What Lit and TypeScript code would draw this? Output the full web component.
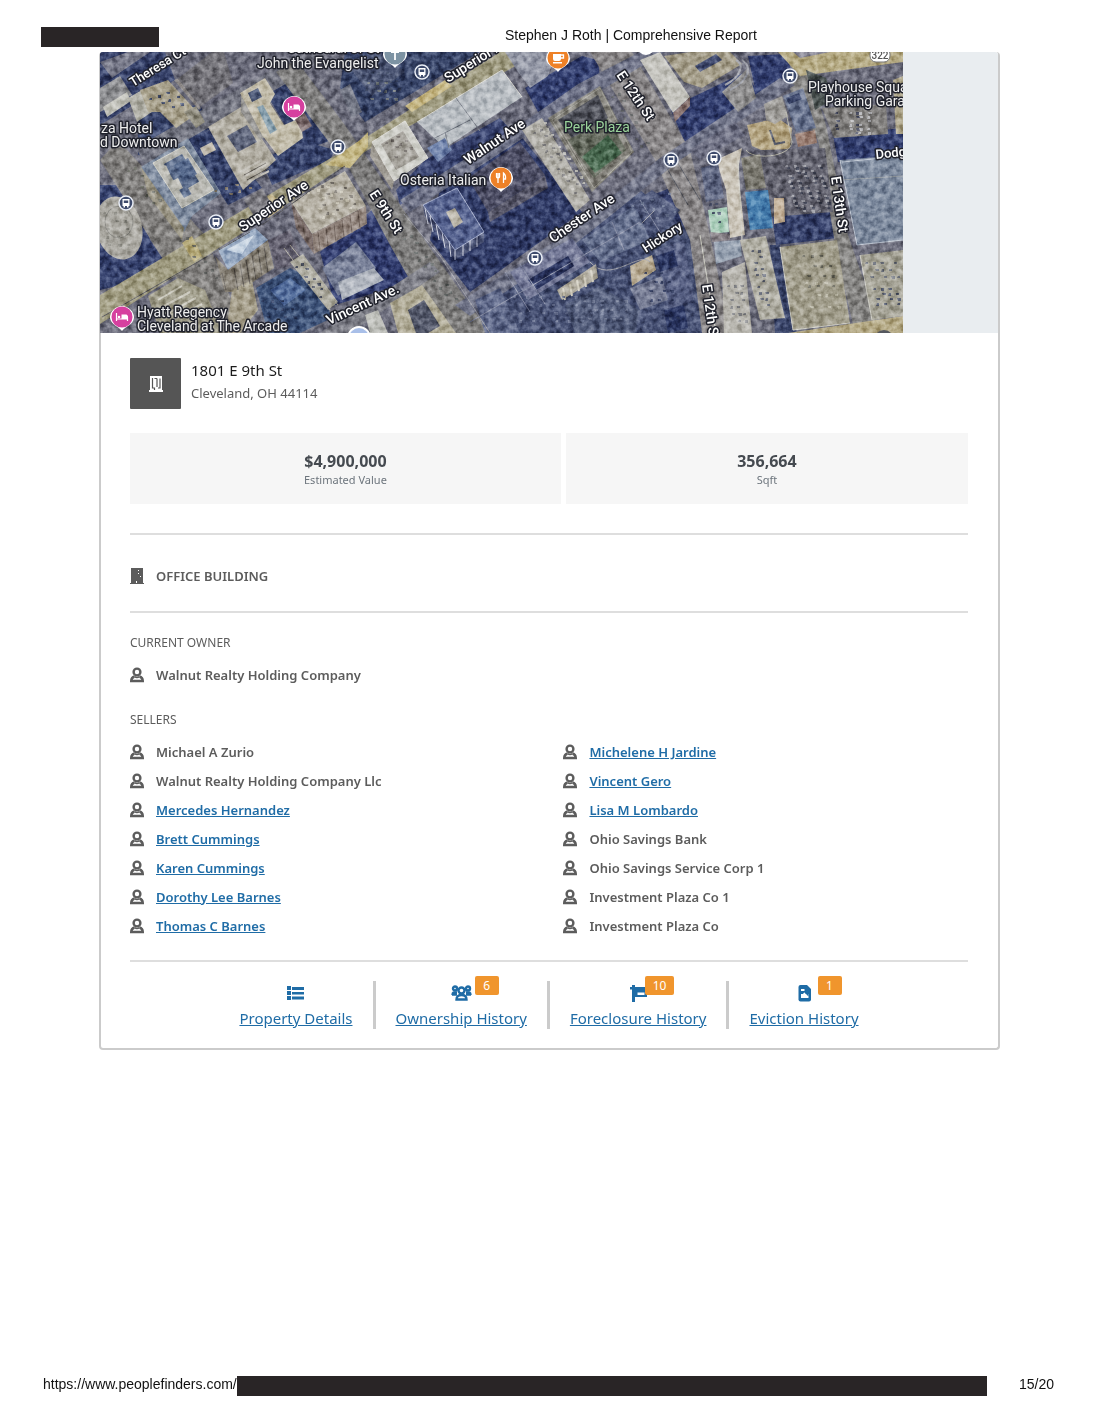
import { LitElement, html, css, svg, nothing } from "lit";
import { customElement, property } from "lit/decorators.js";

type Shape = [fill: string, points: string];

interface Person {
  name: string;
  linked?: boolean;
}

interface Action {
  label: string;
  icon: "list" | "users" | "sign" | "doc";
  count?: number;
}

/* Ground-level bands: shadows and streets, painted back to front. */
const GROUND: Shape[] = [
  ["#2c3764", "100,52 165,52 175,80 100,125"],
  ["#2e3a66", "138,110 200,105 212,128 165,158 138,155"],
  ["#293562", "263,80 292,70 345,135 305,150 285,125 270,100"],
  ["#293562", "186,140 215,128 262,188 228,205"],
  ["#2c3866", "262,160 300,140 335,150 330,160 272,185"],
  ["#2d3a63", "345,52 480,52 365,122 340,88"],
  ["#2b3768", "100,185 135,185 150,240 165,262 120,285 100,290"],
  ["#27336a", "320,252 372,210 420,265 400,285 335,305"],
  ["#263162", "440,188 520,135 582,212 470,292 430,240"],
  ["#2d3768", "640,200 690,180 700,270 712,333 640,333"],
  ["#28346a", "670,108 745,72 760,95 686,145"],
  ["#28346a", "748,56 786,54 795,82 757,98"],
  ["#28346a", "525,88 582,56 598,60 600,78 538,112"],
  ["#28346a", "833,135 903,128 903,157 838,162"],
  ["#2c3766", "772,216 834,211 838,238 776,245"],
  ["#323d66", "770,245 780,245 797,333 775,333"],
  ["#3e486f", "500,280 640,190 700,240 710,333 470,333"],
  ["#303b6c", "396,190 425,160 500,118 515,135 400,205"],
  ["#817d7b", "100,160 118,140 205,235 245,333 215,333 165,262"],
  ["#71727f", "136,148 285,62 300,52 330,52 296,78 145,164"],
  ["#7d7b7a", "276,72 296,60 345,125 372,165 490,333 440,333 390,245 350,170"],
  ["#898586", "590,52 632,52 690,150 710,235 730,333 702,333 690,240 655,160"],
  ["#858380", "782,75 808,70 826,125 848,235 882,333 855,333 836,250 818,140"],
  ["#6b6f86", "400,200 530,118 578,84 640,52 665,52 545,124 410,212"],
  ["#6d7086", "455,305 560,238 660,158 780,78 795,85 680,160 570,248 470,316"],
  ["#7a7a84", "320,333 430,262 440,272 350,333"],
  ["#a19b7d", "100,295 270,194 368,136 500,52 540,52 368,150 275,212 100,324"],
  ["#c4b486", "255,205 272,194 284,207 268,218"],
  ["#c8b87f", "325,165 360,140 368,132 368,147 350,168"],
  ["#cbb980", "405,106 445,80 452,86 412,112"],
  ["#beb07c", "182,243 192,236 202,256 194,262"],
  ["#b9ac80", "778,52 903,52 903,62 800,76"],
  ["#b9ac84", "788,333 903,316 903,333"],
];

/* Roofs and facades. */
const BUILDINGS: Shape[] = [
  ["#77788a", "100,62 128,52 150,52 112,78"],
  ["#8d8d90", "100,88 120,76 132,95 100,112"],
  ["#cccbc3", "103,107 127,92 131,101 107,117"],
  ["#b7b5ab", "128,98 142,90 152,112 137,122"],
  ["#aaa18a", "140,90 168,80 198,113 176,128 160,112 148,112"],
  ["#6e6b72", "176,80 212,52 224,52 233,83 200,107"],
  ["#8f8a88", "174,80 178,79 201,108 199,110"],
  ["#8e8a7a", "184,112 196,106 205,122 196,128"],
  ["#b6b0a4", "208,127 241,107 276,160 243,190"],
  ["#989694", "241,93 250,88 268,135 260,140 241,112"],
  ["#5b617a", "227,136 247,125 257,142 238,152"],
  ["#c8c0ac", "240,93 265,78 275,94 270,103 284,125 300,118 303,138 278,156 262,135"],
  ["#3a4769", "248,93 258,88 262,97 252,102"],
  ["#87a1b0", "257,107 263,105 277,130 270,134"],
  ["#7a6667", "294,118 304,112 312,126 302,132"],
  ["#c4bcad", "200,148 212,142 216,150 204,156"],
  ["#7d8ba1", "141,167 188,138 221,193 192,216 184,232"],
  ["#9c9684", "141,167 184,228 182,240 148,195"],
  ["#b9b8b1", "153,163 184,146 214,190 182,208"],
  ["#586a8d", "164,164 182,154 203,188 184,198"],
  ["#cac8c0", "160,170 166,165 170,174 164,178"],
  ["#c2c0b8", "170,182 178,178 183,188 175,192"],
  ["#c0beb7", "188,188 202,180 206,188 192,195"],
  ["#4e6289", "174,165 188,158 197,174 183,182"],
  ["#7f7d84", "244,200 262,188 272,205 254,216"],
  ["#9aadc8", "218,250 255,228 268,240 228,270"],
  ["#d3dfee", "226,250 254,235 242,254"],
  ["#8d8579", "215,256 228,270 268,240 274,268 238,292 225,292"],
  ["#605c6c", "268,240 290,230 303,262 276,270"],
  ["#a09b86", "148,296 178,278 205,290 222,333 160,333"],
  ["#324872", "256,288 290,268 318,282 332,318 300,333 268,333"],
  ["#4b679b", "270,290 290,278 306,290 284,306"],
  ["#bab4a6", "291,202 345,171 366,206 312,234"],
  ["#7b6a66", "291,202 312,234 314,254 296,228"],
  ["#94847b", "312,234 366,206 367,224 314,254"],
  ["#767e99", "322,268 356,242 376,268 338,296"],
  ["#b7bcc6", "338,282 374,268 384,280 342,300"],
  ["#b0ada0", "290,262 303,254 338,302 328,310"],
  ["#a79f88", "232,290 252,280 258,310 240,333 226,333"],
  ["#454f70", "345,62 380,52 405,72 372,96"],
  ["#6e7180", "340,90 350,84 362,112 352,118"],
  ["#bec2c8", "417,122 502,70 522,97 445,148"],
  ["#6e82ae", "427,148 445,138 452,150 438,162"],
  ["#d6d5cf", "372,142 405,121 428,158 394,181"],
  ["#aca7a0", "381,144 403,131 419,157 396,170"],
  ["#a09a91", "372,142 394,181 392,190 370,156"],
  ["#989bab", "505,52 556,52 548,76 530,88 518,72"],
  ["#b2aea6", "522,130 542,118 590,200 576,212"],
  ["#85827a", "548,118 600,86 634,152 592,192"],
  ["#4a4b55", "558,120 598,95 608,118 575,142"],
  ["#606557", "568,140 608,118 626,150 594,178"],
  ["#3f6146", "582,157 608,135 622,153 595,173"],
  ["#46465f", "468,178 520,142 545,175 488,212"],
  ["#4d4c60", "488,212 545,175 548,188 490,222"],
  ["#4f5c8e", "423,205 457,188 484,232 455,250"],
  ["#3e466d", "423,205 455,250 455,260 425,216"],
  ["#454d73", "455,250 484,232 484,242 455,260"],
  ["#bfb8aa", "446,212 455,208 463,222 454,228"],
  ["#74799a", "510,272 572,238 590,262 528,300"],
  ["#222c5c", "528,280 568,256 574,266 536,290"],
  ["#606b8d", "582,240 635,205 650,240 600,262"],
  ["#b1ab9c", "557,290 596,264 598,278 562,300"],
  ["#5a6488", "475,300 500,288 520,333 485,333"],
  ["#4c5678", "565,305 600,286 640,310 635,333 575,333"],
  ["#b7b09a", "390,303 422,285 456,333 398,333"],
  ["#4a4e62", "408,310 424,300 440,326 428,333 416,333"],
  ["#c5c4bf", "365,315 378,310 388,333 370,333"],
  ["#cbc9c2", "640,60 660,52 690,97 673,113"],
  ["#876f6b", "673,113 690,97 690,106 675,122"],
  ["#a79f88", "664,56 690,52 730,52 742,64 702,88 684,82"],
  ["#404a72", "695,66 716,54 722,60 700,72"],
  ["#8e8c8c", "722,92 748,68 756,98 738,112"],
  ["#6b6c82", "690,150 735,122 745,135 700,160"],
  ["#b9a781", "747,125 778,118 792,128 790,148 770,154 752,146"],
  ["#a09c98", "764,104 782,96 788,116 775,124 766,120"],
  ["#65708e", "783,96 803,88 816,128 796,132"],
  ["#2f3a62", "786,98 799,93 802,99 789,104"],
  ["#98786a", "795,134 815,130 817,143 798,147"],
  ["#5d5c69", "760,150 825,148 833,212 770,217"],
  ["#7a776c", "741,158 760,154 766,188 746,190"],
  ["#3b78ad", "745,192 768,190 773,228 750,230"],
  ["#d2cabd", "716,160 742,148 738,170 745,235 730,238 726,190"],
  ["#5b6280", "701,168 718,163 724,198 706,202"],
  ["#b3d6c2", "708,210 727,207 729,232 711,234"],
  ["#cbb69c", "774,198 784,198 785,222 774,224"],
  ["#857d84", "710,232 730,234 730,240 712,242"],
  ["#99a4b5", "714,242 740,240 742,256 716,264"],
  ["#b4b0a4", "740,240 766,236 785,318 760,320"],
  ["#bbb8b0", "722,272 745,262 752,333 724,333"],
  ["#a39d89", "780,247 837,240 850,323 793,330"],
  ["#7b889f", "840,160 903,155 903,240 857,245"],
  ["#aaa698", "860,255 903,250 903,316 872,320"],
  ["#7e7b79", "822,108 886,104 888,134 834,138"],
  ["#48504f", "806,70 826,78 832,100 815,110"],
  ["#b2a78a", "893,80 903,76 903,134 896,134"],
  ["#8a8797", "793,52 830,52 800,58"],
  ["#4b5479", "630,205 652,190 680,210 662,232"],
  ["#b9aa8f", "630,266 652,255 656,270 632,286"],
  ["#515a80", "655,250 684,240 694,300 668,310"],
  ["#1f2a5a", "656,256 674,250 678,266 660,272"],
  ["#1f2a5a", "664,310 684,305 688,328 668,333"],
  ["#747a95", "630,288 662,276 668,300 640,310"],
];

/* Fine linework on roofs: [colour, width, path]. */
const LINES: [string, number, string][] = [
  ["#55545a", 1, "M102 317 L250 232 M262 225 L345 166"],
  ["#d8d6cc", 1, "M153 163 184 146 214 190 182 208Z"],
  ["#e2e0da", 1, "M372 142 405 121 428 158 394 181Z M417 122 502 70 522 97"],
  ["#7a7f8a", 1, "M456 98 480 131 M433 139 470 120 M445 132 449 148"],
  ["#d9dbe8", 1, "M425 208 428 224 M430 216 433 232 M436 224 439 240 M442 232 445 248 M449 241 451 257 M455 250V260 M463 245V256 M470 241V251 M477 236V247"],
  ["#aab3d3", 1, "M423 205 457 188 484 232 455 250Z"],
  ["#d8d2c2", 2, "M563 288 565 300 M570 284 572 296 M577 280 579 291 M584 275 586 287 M591 270 593 282"],
  ["#c9c5bc", 2, "M240 172 262 160 M243 177 266 165 M246 183 269 171"],
  ["#5c5650", 1, "M244 175 266 163 M247 180 269 168 M222 273 226 290 M234 268 238 290 M240 264 244 287 M246 260 250 284 M252 255 256 280 M258 250 262 276 M264 246 268 272"],
  ["#66574f", 1, "M318 232 320 250 M326 228 328 246 M334 224 336 242 M342 220 344 237 M350 215 352 233 M358 211 360 229 M296 212 299 228 M302 220 305 238"],
  ["#d2cfc2", 2, "M158 300 182 286 M164 306 190 292 M168 313 196 298 M172 320 202 304"],
  ["#a7a49a", 1, "M552 120 600 88 632 152 594 188Z M560 128 586 172"],
  ["#b9b6a8", 1, "M746 150 C752 160 790 158 792 142 L786 112"],
  ["#bfc7d4", 1, "M840 160 857 245 903 240 M842 162 903 156"],
  ["#9fa5ab", 1, "M840 180 903 176"],
  ["#d4d2c8", 1, "M780 247 793 330 850 323 M860 255 872 320 M700 235 716 333 M738 160 742 240"],
  ["#a8a9b2", 2, "M725 85 C742 76 744 64 736 60 M730 90 C750 80 752 66 742 60"],
  ["#8a8fa8", 1, "M470 322 640 222 M505 272 530 312 M520 264 545 304 M612 222 624 250 M640 200 665 240"],
  ["#9b9ba4", 1, "M440 256 490 333 M404 214 445 262 M655 210 640 225 M590 262 C610 285 640 250 650 262"],
  ["#5a5c66", 1, "M665 165 688 205 M676 160 700 200"],
  ["#4c5162", 2, "M770 130 775 144 785 142"],
  ["#b8b2a6", 1, "M290 245 338 305 M284 248 330 310"],
];

/* Small repeated marks: rows of parked cars, roof vents and trees.
   [x, y, columns, rows, column step, row step, row skew, colour] */
const MARKS: [number, number, number, number, number, number, number, string][] = [
  [786, 165, 5, 10, 8, 5, 1, "#a0a0a9"],
  [788, 167, 5, 9, 8, 5, 1, "#2f3247"],
  [836, 112, 2, 6, 20, 4, 0, "#30354f"],
  [850, 112, 3, 6, 9, 4, 0, "#c5c5ca"],
  [296, 266, 2, 7, 5, 5, 4, "#3e4358"],
  [150, 98, 4, 3, 8, 7, 3, "#39466e"],
  [386, 142, 4, 3, 5, 7, 4, "#77716c"],
  [534, 132, 3, 11, 6, 6, 4, "#7b7a7c"],
  [531, 128, 3, 11, 6, 6, 4, "#cdcac2"],
  [752, 250, 2, 10, 6, 6, 1, "#5b6074"],
  [803, 255, 4, 4, 8, 10, 2, "#6d6c62"],
  [806, 282, 4, 3, 9, 12, 2, "#c9c5b4"],
  [866, 262, 5, 3, 7, 7, 2, "#5c6070"],
  [874, 288, 4, 4, 7, 5, 1, "#4b526c"],
  [312, 188, 4, 4, 9, 8, 5, "#757068"],
  [308, 192, 4, 4, 9, 8, 5, "#ddd8cb"],
  [180, 240, 2, 6, 6, 8, 6, "#5f605f"],
  [128, 170, 2, 5, 6, 8, 6, "#66675f"],
  [404, 238, 2, 10, 6, 7, 5, "#5c6160"],
  [612, 96, 2, 8, 6, 7, 4, "#66676a"],
  [104, 212, 3, 5, 10, 8, 1, "#8c8a83"],
  [728, 285, 3, 6, 6, 7, 1, "#7c7c84"],
  [704, 176, 2, 6, 5, 9, 2, "#49506d"],
  [360, 64, 5, 4, 8, 8, 2, "#303b58"],
  [368, 82, 4, 3, 8, 8, 1, "#767a78"],
  [645, 272, 4, 6, 7, 9, 2, "#2c365e"],
  [514, 296, 8, 4, 12, 8, 2, "#6f7898"],
  [632, 205, 5, 3, 9, 9, 3, "#76809c"],
  [215, 190, 4, 2, 10, 6, 4, "#8a7a62"],
  [584, 300, 6, 3, 8, 9, 2, "#747d98"],
  [262, 300, 4, 3, 9, 8, 2, "#223056"],
];

/* [text, x, y, rotation, size, weight, fill] */
const LABELS: [string, number, number, number, number, number, string][] = [
  ["Theresa Ct", 133, 87, -32, 13, 500, "#fff"],
  ["Cathedral of St", 287, 53, 0, 14, 400, "#eee"],
  ["John the Evangelist", 257, 68, 0, 14, 400, "#eee"],
  ["Superior Ave", 448, 83, -32, 14, 500, "#fff"],
  ["Superior Ave", 243, 232, -34, 14, 500, "#fff"],
  ["za Hotel", 101, 133, 0, 14, 400, "#eee"],
  ["d Downtown", 100, 147, 0, 14, 400, "#eee"],
  ["Osteria Italian", 400, 185, 0, 14, 400, "#eee"],
  ["Walnut Ave", 468, 165, -34, 14, 500, "#fff"],
  ["E 9th St", 369, 194, 57, 14, 500, "#fff"],
  ["E 12th St", 616, 75, 56, 14, 500, "#fff"],
  ["Perk Plaza", 564, 132, 0, 14, 400, "#9ad29a"],
  ["Chester Ave", 553, 243, -34, 14, 500, "#fff"],
  ["Hickory", 646, 253, -33, 13, 500, "#fff"],
  ["E 13th St", 831, 177, 82, 14, 500, "#fff"],
  ["E 12th St", 702, 285, 82, 14, 500, "#fff"],
  ["Dodge Ct", 876, 159, -6, 13, 500, "#fff"],
  ["Playhouse Square", 808, 92, 0, 14, 400, "#eee"],
  ["Parking Garage", 825, 106, 0, 14, 400, "#eee"],
  ["Vincent Ave.", 329, 325, -25, 14, 500, "#fff"],
  ["Hyatt Regency", 137, 317, 0, 14, 400, "#eee"],
  ["Cleveland at The Arcade", 137, 331, 0, 14, 400, "#eee"],
];

const STOPS: [number, number][] = [
  [422, 72], [338, 147], [126, 203], [216, 222], [535, 258], [671, 160], [714, 158], [790, 76],
];

@customElement("area-map")
class AreaMap extends LitElement {
  static styles = css`
    :host {
      display: block;
      overflow: hidden;
      background: #e9edf0;
      border-radius: 3px 3px 0 0;
    }
    .canvas {
      display: block;
      width: 803px;
      height: 281px;
    }
    .grain {
      mix-blend-mode: soft-light;
    }
    .label {
      font-family: Roboto, "Noto Sans", sans-serif;
      stroke: #20222c;
      stroke-width: 3px;
      stroke-linejoin: round;
      paint-order: stroke;
    }
    .route {
      font: 500 10px Roboto, sans-serif;
      fill: #555;
      text-anchor: middle;
    }
  `;

  private marks() {
    return MARKS.map(([x, y, cols, rows, dx, dy, skew, colour]) => {
      let d = "";
      for (let r = 0; r < rows; r++) {
        for (let c = 0; c < cols; c++) {
          if ((r * 7 + c * 5) % 4 === 3) continue;
          const px = x + c * dx + r * skew;
          const py = y + r * dy - (skew > 2 ? c * 3 : 0);
          d += `M${px} ${py}h${2 + ((r + c) % 3)}v${2 + ((r + c) % 2)}h-3z`;
        }
      }
      return svg`<path d=${d} fill=${colour} opacity="0.85" />`;
    });
  }

  private pin(x: number, y: number, colour: string, glyph: unknown) {
    return svg`<g transform="translate(${x} ${y})">
      <path d="M-12 1A12 12 0 1 1 12 1C11 8 4 9 0 14C-4 9 -11 8 -12 1Z" fill="#fff" />
      <circle r="10.500" fill=${colour} />
      ${glyph}
    </g>`;
  }

  render() {
    const bed = svg`<path d="M-5.500 -4V4M-5.500 2H5.500M5.500 4V0" fill="none" stroke="#fff" stroke-width="1.200" />
      <path d="M-0.500 -2.500H4.500L6 -1V2H-0.500Z" fill="#fff" /><circle cx="-3" cy="0" r="1.300" fill="#fff" />`;
    return html`<svg class="canvas" viewBox="100 52 803 281" role="img" aria-label="Satellite map">
      <defs>
        <filter id="grain" x="0" y="0" width="100%" height="100%" color-interpolation-filters="sRGB">
          <feTurbulence type="fractalNoise" baseFrequency="0.16" numOctaves="3" seed="8" />
          <feColorMatrix values="1.8 0 0 0 -0.38  1.8 0 0 0 -0.38  1.8 0 0 0 -0.38  0 0 0 0 1" />
        </filter>
      </defs>
      <rect x="100" y="52" width="803" height="281" fill="#69697a" />
      ${GROUND.map(([f, p]) => svg`<polygon points=${p} fill=${f} />`)}
      ${BUILDINGS.map(([f, p]) => svg`<polygon points=${p} fill=${f} />`)}
      <ellipse cx="119" cy="228" rx="23" ry="32" fill="#aeaba3" transform="rotate(-14 119 228)" />
      <ellipse cx="119" cy="222" rx="14" ry="16" fill="none" stroke="#8a8882" />
      ${LINES.map(([c, w, d]) => svg`<path d=${d} stroke=${c} stroke-width=${w} fill="none" />`)}
      ${this.marks()}
      <rect x="100" y="52" width="803" height="281" fill="#8c8f92" opacity="0.1" />
      <rect class="grain" x="100" y="52" width="803" height="281" filter="url(#grain)" opacity="0.7" />
      ${STOPS.map(([x, y]) => svg`<g transform="translate(${x} ${y})">
        <circle r="7" fill="#3d4a6b" stroke="#e9edf5" stroke-width="1.500" />
        <path d="M-3.500 -4H3.500V3H2.500V4.500H1V3H-1V4.500H-2.500V3H-3.500Z" fill="#fff" />
        <path d="M-2.200 -2.500H2.200V0H-2.200Z" fill="#3d4a6b" />
      </g>`)}
      ${this.pin(294, 107, "#d6409f", bed)}
      ${this.pin(122, 317, "#d6409f", bed)}
      ${this.pin(501, 178, "#ee8127", svg`<path d="M-4.500 -5V-1.500Q-4.500 0 -3 0V5M-3 -5V0M-1.500 -5V-1.500Q-1.500 0 -3 0M2.500 5V-5Q5 -3 4.500 1H2.500" fill="none" stroke="#fff" stroke-width="1.300" />`)}
      ${this.pin(558, 58, "#ee8127", svg`<path d="M-5 -4H3V1Q3 3 1 3H-3Q-5 3 -5 1ZM-5 4H4V5.500H-5Z" fill="#fff" /><path d="M3 -3H5.500V0H3" fill="none" stroke="#fff" stroke-width="1.300" />`)}
      ${this.pin(395, 54, "#7d93a3", svg`<path d="M0 -6V6M-4 -2H4" stroke="#fff" stroke-width="1.800" />`)}
      <circle cx="359" cy="338" r="11" fill="#a9bfe8" stroke="#fff" stroke-width="2" />
      <circle cx="884" cy="340" r="10" fill="#55585f" />
      <circle cx="646" cy="46" r="9" fill="#fff" />
      <rect x="870" y="48" width="20" height="14" rx="6" fill="#fff" stroke="#777" />
      <text class="route" x="880" y="59">322</text>
      ${LABELS.map(([t, x, y, a, s, w, f]) => svg`<text class="label" transform="translate(${x} ${y}) rotate(${a})"
        font-size=${s} font-weight=${w} fill=${f}>${t}</text>`)}
    </svg>`;
  }
}

@customElement("person-item")
class PersonItem extends LitElement {
  @property() name = "";
  @property({ type: Boolean }) linked = false;

  static styles = css`
    :host {
      display: flex;
      align-items: center;
      gap: 12px;
      height: 29px;
      font-weight: 600;
    }
    .icon {
      width: 14px;
      height: 16px;
      flex: none;
    }
    a {
      color: #1f6ca6;
      text-underline-offset: 1px;
    }
  `;

  render() {
    return html`<svg class="icon" viewBox="0 0 14 16" fill="none" stroke="#5c5c5c" stroke-width="2.400" aria-hidden="true">
        <circle cx="7" cy="5" r="3.400" />
        <path d="M4.500 9.500C2.500 10 1.300 11 1.200 14H12.800C12.700 11 11.500 10 9.500 9.500" />
        <path d="M4.500 9.500Q7 11.500 9.500 9.500" stroke-width="1.500" />
      </svg>
      ${this.linked ? html`<a href="#">${this.name}</a>` : html`<span>${this.name}</span>`}`;
  }
}

const SELLERS: Person[][] = [
  [
    { name: "Michael A Zurio" },
    { name: "Walnut Realty Holding Company Llc" },
    { name: "Mercedes Hernandez", linked: true },
    { name: "Brett Cummings", linked: true },
    { name: "Karen Cummings", linked: true },
    { name: "Dorothy Lee Barnes", linked: true },
    { name: "Thomas C Barnes", linked: true },
  ],
  [
    { name: "Michelene H Jardine", linked: true },
    { name: "Vincent Gero", linked: true },
    { name: "Lisa M Lombardo", linked: true },
    { name: "Ohio Savings Bank" },
    { name: "Ohio Savings Service Corp 1" },
    { name: "Investment Plaza Co 1" },
    { name: "Investment Plaza Co" },
  ],
];

const ACTIONS: Action[] = [
  { label: "Property Details", icon: "list" },
  { label: "Ownership History", icon: "users", count: 6 },
  { label: "Foreclosure History", icon: "sign", count: 10 },
  { label: "Eviction History", icon: "doc", count: 1 },
];

const ACTION_ICONS = {
  list: svg`<path d="M2 3h4v4H2zM2 8h4v4H2zM2 13h4v4H2zM7 4h12v3H7zM7 9h12v2.500H7zM7 13.500h12v3H7z" fill="currentColor" />`,
  users: svg`<g fill="none" stroke="currentColor" stroke-width="2.400">
    <circle cx="10.500" cy="7.500" r="3" /><path d="M5.500 16.500C5.500 13.500 7.500 12 10.500 12S15.500 13.500 15.500 16.500Z" />
    <circle cx="4" cy="5.500" r="2" /><circle cx="17" cy="5.500" r="2" />
    <path d="M1.500 12C1.500 9.500 2.500 9 6 9.500M19.500 12C19.500 9.500 18.500 9 15 9.500M1 11.500H6M15 11.500H20" /></g>`,
  sign: svg`<path d="M4 2h3v2h12v10H7v5H4V6.500H2V4h2z" fill="currentColor" /><path d="M9.500 9.500h7v2.500h-7z" fill="#fff" />`,
  doc: svg`<path d="M6.500 2H13l4 4v10.500Q17 18.500 15 18.500H6.500Q4.500 18.500 4.500 16.500V4Q4.500 2 6.500 2Z" fill="currentColor" />
    <path d="M7 6h3.500v2H7zM7 11h2l1.500-2 1.500 2h2.500v4H7z" fill="#fff" /><path d="M10.500 8.500l4 4" stroke="currentColor" stroke-width="1.500" />`,
};

@customElement("app-root")
class AppRoot extends LitElement {
  static styles = css`
    :host {
      display: flex;
      flex-direction: column;
      box-sizing: border-box;
      min-height: 100vh;
      padding: 0 41px 23px;
      background: #fff;
      color: #5c5c5c;
      font: 400 13px/20px "Noto Sans", sans-serif;
    }
    .print-header {
      display: grid;
      grid-template-columns: 464px 1fr;
      height: 25px;
      padding-top: 27px;
    }
    .print-header,
    .print-footer {
      color: #111;
      font-family: "Liberation Sans", sans-serif;
      font-size: 14px;
      line-height: 17px;
    }
    .redacted {
      height: 20px;
      background: #292526;
    }
    .print-header .redacted {
      width: 118px;
    }
    .card {
      margin: 0 56px 0 58px;
      border: 2px solid #cbcbcb;
      border-top-width: 0;
      border-radius: 4px;
    }
    area-map {
      margin-left: -1px;
    }
    .body {
      padding: 25px 30px 19px 29px;
    }
    .address {
      display: flex;
      gap: 10px;
    }
    .tile {
      display: grid;
      place-items: center;
      width: 51px;
      height: 51px;
      border-radius: 1px;
      background: #555;
    }
    .tile svg {
      width: 16px;
      height: 18px;
    }
    .street {
      margin: 1px 0 2px;
      color: #1c1c1c;
      font-size: 15px;
      font-weight: 400;
      line-height: 22px;
    }
    .city {
      margin: 0;
    }
    .stats {
      display: grid;
      grid-template-columns: 15fr 14fr;
      gap: 5px;
      margin: 24px 0 29px;
    }
    .stat {
      display: flex;
      flex-direction: column;
      align-items: center;
      padding: 18px 0 15px;
      background: #f6f6f6;
    }
    .value {
      color: #454a50;
      font-size: 16px;
      font-weight: 700;
    }
    .caption {
      color: #6d757d;
      font-size: 11px;
      line-height: 18px;
    }
    .rule {
      height: 2px;
      margin: 0;
      border: 0;
      background: #dedede;
    }
    .kind {
      display: flex;
      align-items: center;
      gap: 12px;
      padding: 31px 0 25px;
      font-weight: 600;
    }
    .kind svg {
      width: 14px;
      height: 16px;
    }
    h2 {
      margin: 0;
      font-size: 12px;
      font-weight: 400;
      line-height: 20px;
    }
    .owner {
      padding: 20px 0 17px;
    }
    .group {
      display: flex;
      flex-direction: column;
      gap: 7px;
    }
    .columns {
      display: grid;
      grid-template-columns: 15fr 14fr;
    }
    .sellers {
      padding: 4px 0 20px;
    }
    .actions {
      display: flex;
      justify-content: center;
      padding-top: 19px;
    }
    .action {
      display: flex;
      flex-direction: column;
      align-items: center;
      padding: 2px 20px 0;
      height: 46px;
      color: #1f6ca6;
      font-size: 15px;
      line-height: 22px;
      text-underline-offset: 1px;
    }
    .action + .action {
      border-left: 3px solid #cbcbcb;
    }
    .glyph {
      position: relative;
      width: 21px;
      height: 24px;
    }
    .glyph svg {
      display: block;
      width: 21px;
      height: 20px;
    }
    .badge {
      position: absolute;
      left: 100%;
      top: -7px;
      min-width: 8px;
      margin-left: 3px;
      padding: 0 8px;
      border-radius: 2px;
      background: #f0952d;
      color: #fff;
      font-size: 12px;
      line-height: 19px;
      text-align: center;
    }
    .badge.wide {
      margin-left: -4px;
    }
    .print-footer {
      display: flex;
      margin-top: auto;
      padding-left: 2px;
    }
    .print-footer .redacted {
      flex: 1;
    }
    .page-no {
      padding: 0 2px 0 32px;
    }
  `;

  render() {
    return html`
      <header class="print-header">
        <div class="redacted"></div>
        <span>Stephen J Roth | Comprehensive Report</span>
      </header>
      <main class="card">
        <area-map></area-map>
        <div class="body">
          <section class="address">
            <div class="tile">
              <svg viewBox="0 0 16 18" aria-hidden="true">
                <path d="M2 1h12v14h1v2H1v-2h1z" fill="#fff" />
                <path d="M4.500 3V13H6.500V15M6.500 3.500H9M9 3.500V12M12 3.500V13H10" fill="none" stroke="#555" stroke-width="1.200" />
              </svg>
            </div>
            <div>
              <h1 class="street">1801 E 9th St</h1>
              <p class="city">Cleveland, OH 44114</p>
            </div>
          </section>
          <section class="stats">
            <div class="stat"><span class="value">$4,900,000</span><span class="caption">Estimated Value</span></div>
            <div class="stat"><span class="value">356,664</span><span class="caption">Sqft</span></div>
          </section>
          <hr class="rule" />
          <div class="kind">
            <svg viewBox="0 0 14 16" aria-hidden="true">
              <path d="M1 0h12v15h1v1H0v-1h1z" fill="#5c5c5c" />
              <path d="M8 2h1v1H8zM8 5h1v1H8zM6 13h1v2H6zM10 8h1v1h-1z" fill="#fff" />
            </svg>
            <span>OFFICE BUILDING</span>
          </div>
          <hr class="rule" />
          <section class="group owner">
            <h2>CURRENT OWNER</h2>
            <person-item name="Walnut Realty Holding Company"></person-item>
          </section>
          <section class="group sellers">
            <h2>SELLERS</h2>
            <div class="columns">
              ${SELLERS.map((column) => html`<div>
                ${column.map((p) => html`<person-item name=${p.name} ?linked=${!!p.linked}></person-item>`)}
              </div>`)}
            </div>
          </section>
          <hr class="rule" />
          <nav class="actions">
            ${ACTIONS.map((a) => html`<a class="action" href="#">
              <span class="glyph">
                <svg viewBox="0 0 21 20" aria-hidden="true">${ACTION_ICONS[a.icon]}</svg>
                ${a.count ? html`<span class="badge ${a.count > 9 ? "wide" : ""}">${a.count}</span>` : nothing}
              </span>
              <span>${a.label}</span>
            </a>`)}
          </nav>
        </div>
      </main>
      <footer class="print-footer">
        <span>https://www.peoplefinders.com/</span>
        <div class="redacted"></div>
        <span class="page-no">15/20</span>
      </footer>
    `;
  }
}
